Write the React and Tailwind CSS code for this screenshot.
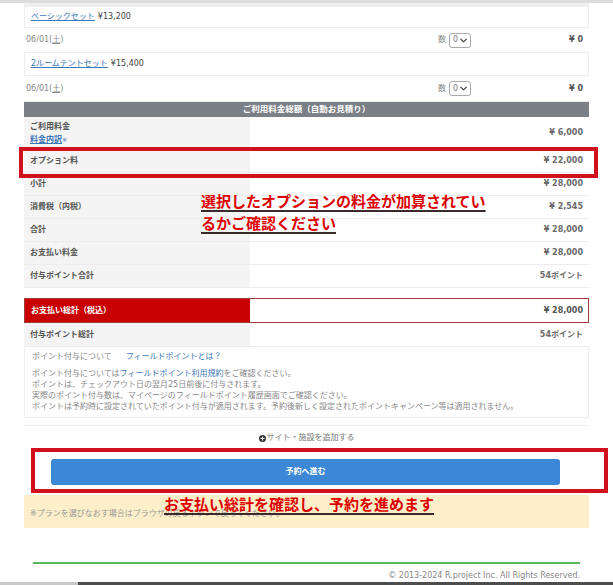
import React from 'react';

const Chevron = () => (
  <svg width="7" height="5" viewBox="0 0 10 6" fill="none" stroke="#444" strokeWidth="1.8" strokeLinecap="round" strokeLinejoin="round">
    <path d="M1 1l4 4 4-4" />
  </svg>
);

const QtySelect = () => (
  <div className="flex items-center gap-[3px] text-[8px] text-[#888]">
    <span>数</span>
    <div className="w-[22px] h-[15px] border border-[#aaa] rounded-[3px] flex items-center justify-between px-[3px] text-[#777] bg-white">
      <span>0</span>
      <Chevron />
    </div>
  </div>
);

const SummaryRow = ({ label, value, h = 'h-[23px]' }) => (
  <div className={`flex ${h} border-b border-[#ececec]`}>
    <div className="w-[226px] bg-[#f4f4f4] flex items-center pl-[6px] text-[8px] font-bold text-[#555]">{label}</div>
    <div className="flex-1 flex items-center justify-end pr-[6px] text-[8px] font-bold text-[#6a6a6a]">{value}</div>
  </div>
);

export default function App() {
  return (
    <div className="relative w-[613px] h-[585px] overflow-hidden bg-white flex flex-col font-['DejaVu_Sans','Noto_Sans_CJK_JP',sans-serif]">
      <div className="h-[3px] bg-[#dcdcdc]" />

      <div className="mx-[24px] w-[565px]">
        <div className="h-[4px] bg-[#efefef]" />

        {/* plan rows */}
        <div className="h-[21px] flex items-center px-[6px] border-x border-b border-[#eee] text-[8px]">
          <a className="text-[#3c78b8] underline">ベーシックセット</a>
          <span className="ml-[3px] text-[#444]">¥13,200</span>
        </div>
        <div className="h-[25px] flex items-center pl-[2px] pr-[6px] border-b border-[#eee] text-[8px] text-[#888]">
          <span>06/01(<span className="underline">土</span>)</span>
          <div className="ml-auto mr-[98px]"><QtySelect /></div>
          <span className="font-bold text-[#555]">¥ 0</span>
        </div>
        <div className="h-[23px] flex items-center px-[6px] border-x border-b border-[#eee] text-[8px]">
          <a className="text-[#3c78b8] underline">2ルームテントセット</a>
          <span className="ml-[3px] text-[#444]">¥15,400</span>
        </div>
        <div className="h-[26px] flex items-center pl-[2px] pr-[6px] border-b border-[#eee] text-[8px] text-[#888]">
          <span>06/01(<span className="underline">土</span>)</span>
          <div className="ml-auto mr-[98px]"><QtySelect /></div>
          <span className="font-bold text-[#555]">¥ 0</span>
        </div>

        {/* summary */}
        <div className="h-[15px] bg-[#7b8087] flex items-center justify-center text-white font-bold text-[8.5px]">
          ご利用料金総額（自動お見積り）
        </div>
        <div className="flex h-[33px] border-b border-[#ececec]">
          <div className="w-[226px] bg-[#f4f4f4] flex flex-col justify-center pl-[6px] text-[8px] leading-[13px]">
            <span className="font-bold text-[#555]">ご利用料金</span>
            <span><a className="text-[#3c78b8] underline font-bold">料金内訳</a><span className="text-[#3c78b8] text-[6px] align-top">※</span></span>
          </div>
          <div className="flex-1 flex items-center justify-end pr-[6px] text-[8px] font-bold text-[#6a6a6a]">¥ 6,000</div>
        </div>
        <SummaryRow label="オプション料" value="¥ 22,000" />
        <SummaryRow label="小計" value="¥ 28,000" />
        <SummaryRow label="消費税（内税）" value="¥ 2,545" />
        <SummaryRow label="合計" value="¥ 28,000" />
        <SummaryRow label="お支払い料金" value="¥ 28,000" />
        <SummaryRow label="付与ポイント合計" value="54ポイント" />

        {/* total */}
        <div className="mt-[10px] flex h-[25px] border-[1.5px] border-[#a13a3a]">
          <div className="w-[225px] bg-[#c80000] flex items-center pl-[6px] text-[8px] font-bold text-white">お支払い総計（税込）</div>
          <div className="flex-1 flex items-center justify-end pr-[5px] text-[8px] font-bold text-[#555]">¥ 28,000</div>
        </div>
        <SummaryRow label="付与ポイント総計" value="54ポイント" h="h-[24px]" />

        <div className="h-[71px] border-x border-b border-[#eee] px-[7px] pt-[4px] text-[8px] text-[#888] leading-[11px]">
          <div className="mb-[6px]">
            ポイント付与について<span className="ml-[14px] text-[#3c78b8]">フィールドポイントとは？</span>
          </div>
          <div>ポイント付与については<span className="text-[#3c78b8]">フィールドポイント利用規約</span>をご確認ください。</div>
          <div>ポイントは、チェックアウト日の翌月25日前後に付与されます。</div>
          <div>実際のポイント付与数は、マイページのフィールドポイント履歴画面でご確認ください。</div>
          <div>ポイントは予約時に設定されていたポイント付与が適用されます。予約後新しく設定されたポイントキャンペーン等は適用されません。</div>
        </div>

        <div className="mt-[7px] h-[25px] border-t border-[#eee] flex items-center justify-center gap-[1px] text-[8px] text-[#777]">
          <span className="w-[7px] h-[7px] rounded-full bg-[#333] flex items-center justify-center">
            <svg width="5" height="5" viewBox="0 0 10 10" stroke="white" strokeWidth="2.2"><path d="M5 1v8M1 5h8" /></svg>
          </span>
          <span>サイト・施設を追加する</span>
        </div>

        <div className="pt-[9px] pl-[27px] pr-[29px]">
          <div className="h-[26px] bg-[#3d88d6] rounded-[3px] flex items-center justify-center text-white font-bold text-[8px]">予約へ進む</div>
        </div>

        <div className="mt-[10px] h-[33px] bg-[#fdefc9] flex items-center pl-[6px] pt-[4px] text-[8px] text-[#999]">
          ※プランを選びなおす場合はブラウザの戻るボタンで戻ってください。
        </div>
      </div>

      <div className="mt-[34px] ml-[33px] w-[547px] h-[2px] bg-[#5cb85c]" />
      <div className="mt-[6px] w-[580px] text-right text-[8px] text-[#888]">© 2013-2024 R.project Inc. All Rights Reserved.</div>

      <div className="mt-auto h-[3px] flex">
        <div className="w-[78px] bg-[#c9c9c9]" />
        <div className="flex-1 bg-[#4d4d4d]" />
      </div>

      {/* annotations */}
      <div className="absolute left-[19px] top-[147px] w-[579px] h-[31px] border-[4px] border-[#d0101c]" />
      <div className="absolute left-[201px] top-[190px] text-[15px] leading-[22px] font-bold text-[#dd0000] font-['Noto_Sans_CJK_JP',sans-serif] underline decoration-[#3a2a2a] decoration-[1.5px] underline-offset-[3px]">
        <div>選択したオプションの料金が加算されてい</div>
        <div>るかご確認ください</div>
      </div>
      <div className="absolute left-[31px] top-[448px] w-[577px] h-[45px] border-[4px] border-[#d0101c]" />
      <div className="absolute left-[164px] top-[493px] text-[15px] leading-[22px] font-bold text-[#dd0000] font-['Noto_Sans_CJK_JP',sans-serif] underline decoration-[#3a2a2a] decoration-[1.5px] underline-offset-[3px]">
        お支払い総計を確認し、予約を進めます
      </div>
    </div>
  );
}
